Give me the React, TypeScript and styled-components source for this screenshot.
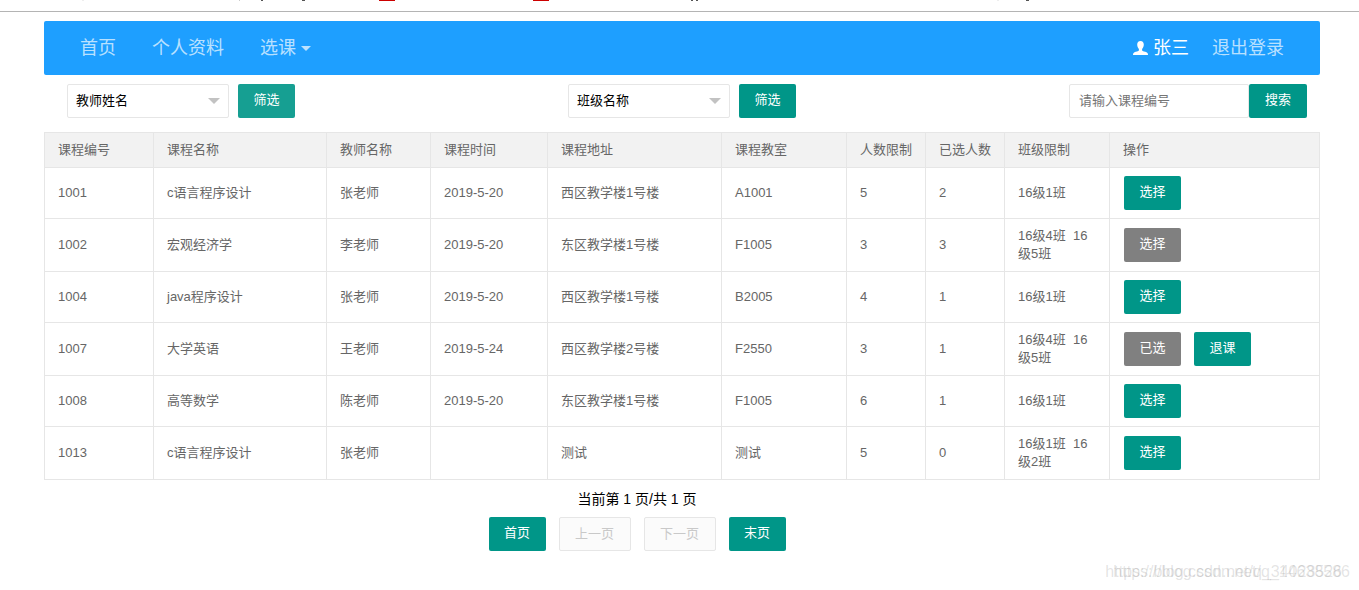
import React from "react";
import styled, { createGlobalStyle } from "styled-components";

const Global = createGlobalStyle`
  *, *::before, *::after { box-sizing: border-box; }
  body {
    margin: 0;
    background: #fff;
    color: #000;
    font: 13px/18px "Liberation Sans", "Noto Sans CJK SC", sans-serif;
  }
  button, input, select { font: inherit; }
`;

const Page = styled.div`
  position: relative;
  min-height: 590px;
`;

const TopStrip = styled.header`
  height: 12px;
  border-bottom: 1px solid #b4b4b4;
  overflow: hidden;
  > svg { display: block; }
`;

const Container = styled.main`
  padding: 9px 39px 0 44px;
`;

const Navbar = styled.nav`
  display: flex;
  justify-content: space-between;
  align-items: center;
  height: 54px;
  padding: 0 36px;
  border-radius: 2px;
  background: #1e9fff;
  font-size: 18px;
  line-height: 24px;
`;

const NavGroup = styled.div<{ $gap: number }>`
  display: flex;
  align-items: center;
  gap: ${(p) => p.$gap}px;
`;

const NavLink = styled.a<{ $strong?: boolean }>`
  display: flex;
  align-items: center;
  gap: 5px;
  color: ${(p) => (p.$strong ? "#fff" : "rgba(255, 255, 255, 0.7)")};
  text-decoration: none;
`;

const NavCaret = styled.span`
  border: 5px solid transparent;
  border-top-color: currentColor;
  border-bottom: 0;
`;

const Toolbar = styled.div`
  display: flex;
  justify-content: space-between;
  padding: 9px 13px 14px 23px;
`;

const Filter = styled.form<{ $gap?: number }>`
  display: flex;
  gap: ${(p) => p.$gap ?? 0}px;
`;

const SelectBox = styled.div`
  display: grid;
  align-items: center;
  width: 162px;
  > * { grid-area: 1 / 1; }
`;

const Select = styled.select`
  appearance: none;
  width: 100%;
  height: 34px;
  padding: 0 28px 0 8px;
  border: 1px solid #e6e6e6;
  border-radius: 2px;
  background: #fff;
  color: #000;
`;

const SelectCaret = styled.span`
  justify-self: end;
  margin-right: 9px;
  border: 6px solid transparent;
  border-top-color: #c2c2c2;
  border-bottom: 0;
  pointer-events: none;
`;

const SearchInput = styled.input`
  width: 180px;
  height: 34px;
  padding: 0 9px 2px;
  border: 1px solid #e6e6e6;
  border-radius: 2px;
  background: #fff;
  &::placeholder { color: #757575; opacity: 1; }
`;

type Tone = "primary" | "hover" | "muted";
const tones: Record<Tone, string> = { primary: "#009688", hover: "#169f92", muted: "#808080" };

const Button = styled.button<{ $tone?: Tone }>`
  min-width: 57px;
  height: 34px;
  padding: 0 15px 2px;
  border: 0;
  border-radius: 2px;
  background: ${(p) => tones[p.$tone ?? "primary"]};
  color: #fff;
  white-space: nowrap;
`;

const SearchButton = styled(Button)`
  min-width: 58px;
`;

const PageButton = styled(Button)`
  &:disabled {
    min-width: 72px;
    padding: 0 15px;
    border: 1px solid #e6e6e6;
    background: #fbfbfb;
    color: #c9c9c9;
  }
`;

const Table = styled.table`
  width: 100%;
  table-layout: fixed;
  border-collapse: collapse;
  color: #666;
`;

const Column = styled.col<{ $width: number }>`
  width: ${(p) => p.$width}px;
`;

const HeadCell = styled.th`
  padding: 8px 13px;
  border: 1px solid #e6e6e6;
  background: #f2f2f2;
  font-weight: 400;
  text-align: left;
  white-space: nowrap;
`;

const Cell = styled.td`
  padding: 8px 13px;
  border: 1px solid #e6e6e6;
  white-space: pre-wrap;
`;

const ActionCell = styled(Cell)`
  padding: 8px 14px;
`;

const Actions = styled.div`
  display: flex;
  gap: 13px;
`;

const Pager = styled.footer`
  display: flex;
  flex-direction: column;
  align-items: center;
  gap: 9px;
  padding: 10px 90px 0 0;
`;

const PagerText = styled.p`
  margin: 0;
  font-size: 14px;
  line-height: 18px;
`;

const Watermark = styled.div`
  position: absolute;
  right: 9px;
  bottom: 8px;
  display: grid;
  justify-items: end;
  color: rgba(120, 120, 120, 0.2);
  font-size: 16px;
  line-height: 20px;
  > * { grid-area: 1 / 1; }
  > :first-child { padding-right: 8px; }
`;

const columns = [
  { label: "课程编号", width: 109 },
  { label: "课程名称", width: 173 },
  { label: "教师名称", width: 104 },
  { label: "课程时间", width: 117 },
  { label: "课程地址", width: 174 },
  { label: "课程教室", width: 125 },
  { label: "人数限制", width: 79 },
  { label: "已选人数", width: 79 },
  { label: "班级限制", width: 105 },
  { label: "操作", width: 210 },
];

type Action = { label: string; tone?: Tone };
type Course = { cells: string[]; actions: Action[] };

const courses: Course[] = [
  { cells: ["1001", "c语言程序设计", "张老师", "2019-5-20", "西区教学楼1号楼", "A1001", "5", "2", "16级1班"], actions: [{ label: "选择" }] },
  { cells: ["1002", "宏观经济学", "李老师", "2019-5-20", "东区教学楼1号楼", "F1005", "3", "3", "16级4班  16级5班"], actions: [{ label: "选择", tone: "muted" }] },
  { cells: ["1004", "java程序设计", "张老师", "2019-5-20", "西区教学楼1号楼", "B2005", "4", "1", "16级1班"], actions: [{ label: "选择" }] },
  { cells: ["1007", "大学英语", "王老师", "2019-5-24", "西区教学楼2号楼", "F2550", "3", "1", "16级4班  16级5班"], actions: [{ label: "已选", tone: "muted" }, { label: "退课" }] },
  { cells: ["1008", "高等数学", "陈老师", "2019-5-20", "东区教学楼1号楼", "F1005", "6", "1", "16级1班"], actions: [{ label: "选择" }] },
  { cells: ["1013", "c语言程序设计", "张老师", "", "测试", "测试", "5", "0", "16级1班  16级2班"], actions: [{ label: "选择" }] },
];

const UserIcon = () => (
  <svg width="15" height="16" viewBox="0 0 15 16" fill="currentColor" aria-hidden="true">
    <path d="M7.500 1C5.300 1 4.200 2.500 4.200 4.600c0 1.800.7 3.500 1.700 4.300v1.500c-.3.600-3.200 1.200-4.400 1.800C.5 12.700 0 13.400 0 15h15c0-1.600-.5-2.300-1.500-2.800-1.200-.6-4.100-1.200-4.400-1.800V8.900c1-.8 1.700-2.500 1.700-4.300C10.800 2.500 9.700 1 7.500 1z" />
  </svg>
);

const stopSubmit = (e: React.FormEvent) => e.preventDefault();

const FilterSelect = ({ label, tone }: { label: string; tone?: Tone }) => (
  <Filter $gap={9} onSubmit={stopSubmit}>
    <SelectBox>
      <Select aria-label={label}>
        <option>{label}</option>
      </Select>
      <SelectCaret />
    </SelectBox>
    <Button $tone={tone}>筛选</Button>
  </Filter>
);

export default function App() {
  return (
    <Page>
      <Global />
      <TopStrip>
        <svg width="1359" height="1" aria-hidden="true">
          <path d="M379 0h16v1h-16zM533 0h16v1h-16z" fill="#c00" />
          <path d="M261 0h2v1h-2zM302 0h3v1h-3zM691 0h2v1h-2zM696 0h2v1h-2zM1026 0h3v1h-3z" fill="#555" />
          <path d="M239 0h1v1h-1z" fill="#ccc" />
          <path d="M82 0h2v1h-2zM997 0h2v1h-2z" fill="#eee" />
        </svg>
      </TopStrip>
      <Container>
        <Navbar>
          <NavGroup $gap={36}>
            <NavLink href="#">首页</NavLink>
            <NavLink href="#">个人资料</NavLink>
            <NavLink href="#">选课<NavCaret /></NavLink>
          </NavGroup>
          <NavGroup $gap={23}>
            <NavLink href="#" $strong><UserIcon />张三</NavLink>
            <NavLink href="#">退出登录</NavLink>
          </NavGroup>
        </Navbar>
        <Toolbar>
          <FilterSelect label="教师姓名" tone="hover" />
          <FilterSelect label="班级名称" />
          <Filter onSubmit={stopSubmit}>
            <SearchInput aria-label="课程编号" placeholder="请输入课程编号" />
            <SearchButton>搜索</SearchButton>
          </Filter>
        </Toolbar>
        <Table>
          <colgroup>
            {columns.map((c) => <Column key={c.label} $width={c.width} />)}
          </colgroup>
          <thead>
            <tr>{columns.map((c) => <HeadCell key={c.label} scope="col">{c.label}</HeadCell>)}</tr>
          </thead>
          <tbody>
            {courses.map((course) => (
              <tr key={course.cells[0]}>
                {course.cells.map((text, i) => <Cell key={i}>{text}</Cell>)}
                <ActionCell>
                  <Actions>
                    {course.actions.map((a) => (
                      <Button key={a.label} type="button" $tone={a.tone}>{a.label}</Button>
                    ))}
                  </Actions>
                </ActionCell>
              </tr>
            ))}
          </tbody>
        </Table>
        <Pager>
          <PagerText>当前第 1 页/共 1 页</PagerText>
          <Actions>
            <PageButton type="button">首页</PageButton>
            <PageButton type="button" disabled>上一页</PageButton>
            <PageButton type="button" disabled>下一页</PageButton>
            <PageButton type="button">末页</PageButton>
          </Actions>
        </Pager>
      </Container>
      <Watermark>
        <span>https://blog.csdn.net/q_34028526</span>
        <span>https://blog.csdn.net/q_14638586</span>
      </Watermark>
    </Page>
  );
}
